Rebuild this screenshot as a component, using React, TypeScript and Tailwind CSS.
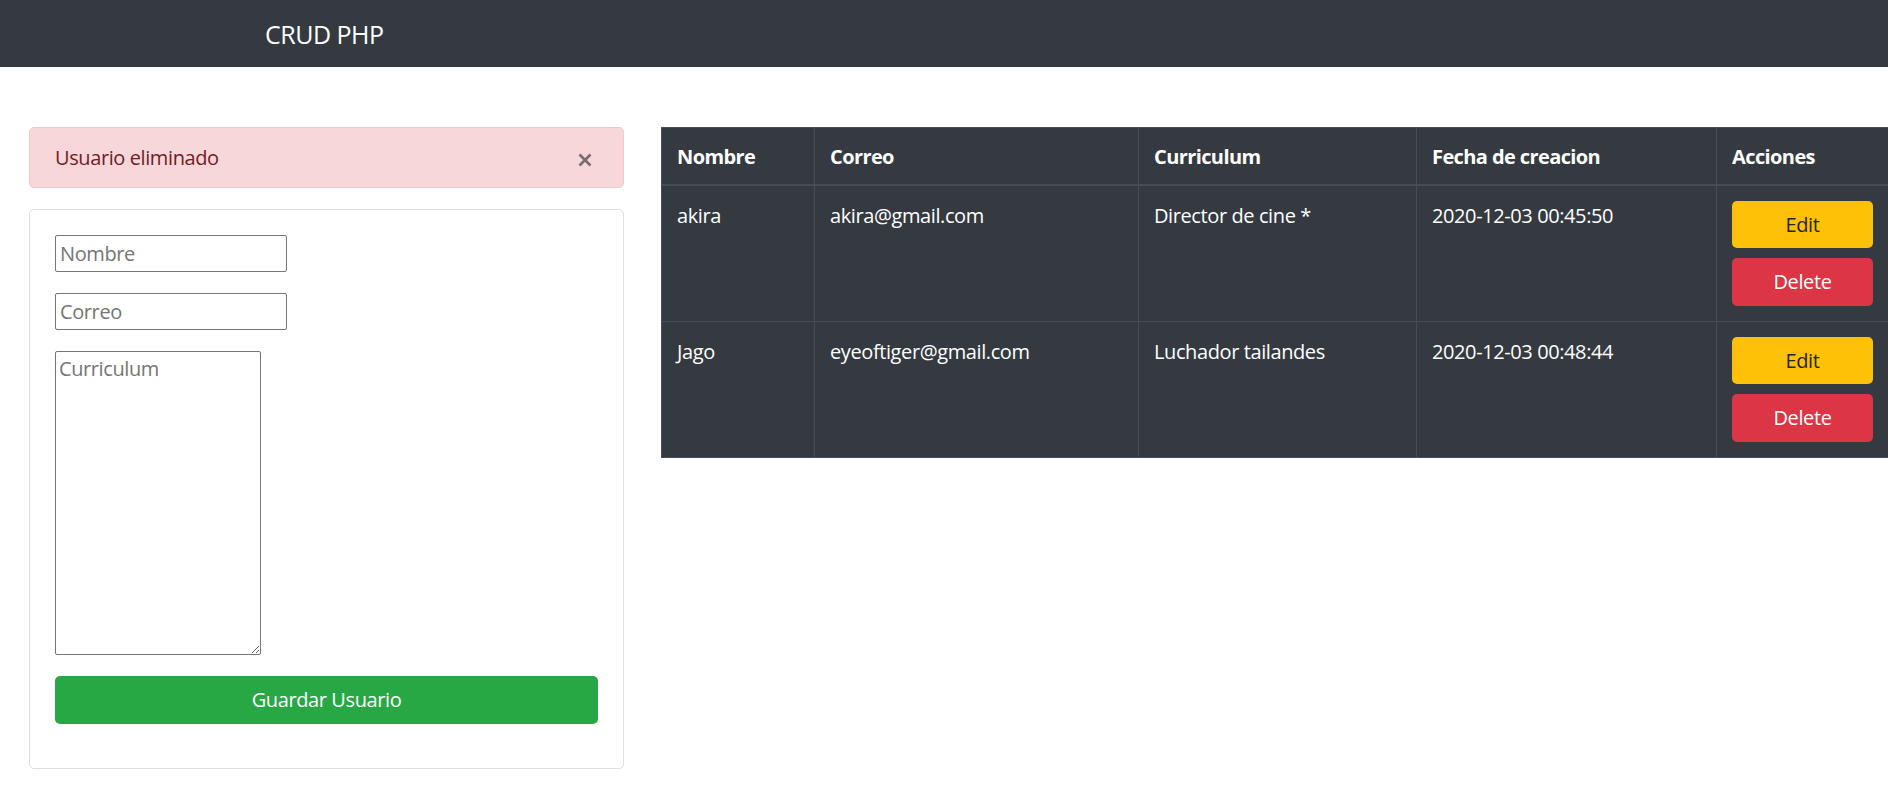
import React from 'react';

const users = [
  { nombre: 'akira', correo: 'akira@gmail.com', curriculum: 'Director de cine *', fecha: '2020-12-03 00:45:50' },
  { nombre: 'Jago', correo: 'eyeoftiger@gmail.com', curriculum: 'Luchador tailandes', fecha: '2020-12-03 00:48:44' },
];

const App = () => {
  return (
    <div className="min-h-screen bg-white font-['Open_Sans',sans-serif] text-[20px] leading-[30px] tracking-[-0.4px] text-[#212529]">
      <nav className="h-[67px] bg-[#343a40] flex items-center pl-[265px]">
        <span className="text-[25px] tracking-[-0.5px] text-white">CRUD PHP</span>
      </nav>

      <main className="flex gap-[37px] pt-[60px] pl-[29px]">
        <div className="w-[595px] shrink-0 flex flex-col gap-[21px]">
          <div className="h-[61px] flex items-center justify-between rounded-[5px] border border-[#f5c6cb] bg-[#f8d7da] pl-[25px] pr-[31px] text-[#721c24]">
            <span>Usuario eliminado</span>
            <svg width="14" height="14" viewBox="0 0 14 14" className="mt-[5px]">
              <path d="M1.5 1.5 L12.5 12.5 M12.5 1.5 L1.5 12.5" stroke="#000" strokeOpacity="0.5" strokeWidth="2.6" />
            </svg>
          </div>

          <form className="flex flex-col items-start gap-[21px] rounded-[5px] border border-[#dfdfdf] px-[25px] pt-[25px] pb-[44px]">
            <input
              type="text"
              placeholder="Nombre"
              className="w-[232px] h-[37px] rounded-[2px] border border-[#767676] px-[4px] text-[20px] placeholder:text-[#757575]"
            />
            <input
              type="text"
              placeholder="Correo"
              className="w-[232px] h-[37px] rounded-[2px] border border-[#767676] px-[4px] text-[20px] placeholder:text-[#757575]"
            />
            <textarea
              placeholder="Curriculum"
              className="w-[206px] h-[304px] rounded-[2px] border border-[#767676] px-[3px] pt-[4px] text-[20px] leading-[26px] placeholder:text-[#757575]"
            />
            <button
              type="button"
              className="w-full h-[48px] rounded-[5px] bg-[#28a745] text-white"
            >
              Guardar Usuario
            </button>
          </form>
        </div>

        <div className="flex-1">
          <table className="w-[1227px] table-fixed border-collapse bg-[#343a40] text-white">
            <colgroup>
              <col className="w-[153px]" />
              <col className="w-[324px]" />
              <col className="w-[278px]" />
              <col className="w-[300px]" />
              <col className="w-[172px]" />
            </colgroup>
            <thead>
              <tr>
                {['Nombre', 'Correo', 'Curriculum', 'Fecha de creacion', 'Acciones'].map((h) => (
                  <th
                    key={h}
                    className="border border-b-2 border-[#454d55] px-[15px] pt-[14px] pb-[12px] text-left font-bold tracking-[-0.6px] align-bottom"
                  >
                    {h}
                  </th>
                ))}
              </tr>
            </thead>
            <tbody>
              {users.map((u) => (
                <tr key={u.correo}>
                  <td className="border border-[#454d55] px-[15px] py-[15px] align-top">{u.nombre}</td>
                  <td className="border border-[#454d55] px-[15px] py-[15px] align-top">{u.correo}</td>
                  <td className="border border-[#454d55] px-[15px] py-[15px] align-top">{u.curriculum}</td>
                  <td className="border border-[#454d55] px-[15px] py-[15px] align-top">{u.fecha}</td>
                  <td className="border border-[#454d55] px-[15px] py-[15px] align-top">
                    <div className="flex flex-col gap-[10px]">
                      <button type="button" className="h-[47px] w-full rounded-[5px] bg-[#ffc107] text-[#212529]">
                        Edit
                      </button>
                      <button type="button" className="h-[48px] w-full rounded-[5px] bg-[#dc3545] text-white">
                        Delete
                      </button>
                    </div>
                  </td>
                </tr>
              ))}
            </tbody>
          </table>
        </div>
      </main>
    </div>
  );
};

export default App;
